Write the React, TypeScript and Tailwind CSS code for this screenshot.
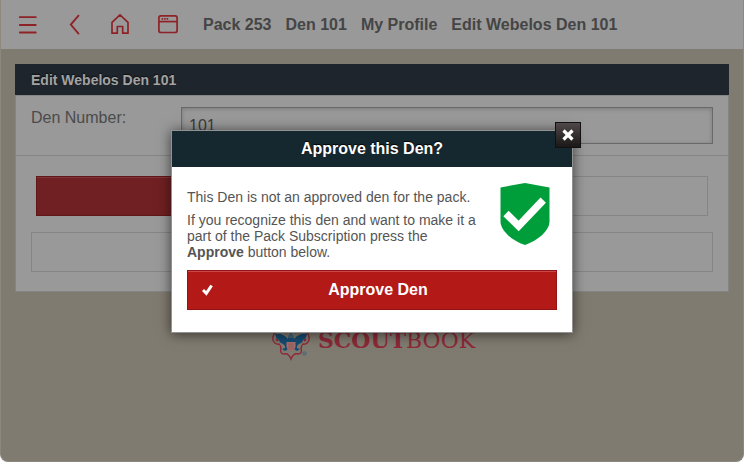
const crumbs = ['Pack 253', 'Den 101', 'My Profile', 'Edit Webelos Den 101'];

function MenuIcon() {
  return (
    <svg width="20" height="22" viewBox="0 0 20 22" fill="none" stroke="#8f2226" strokeWidth="1.8" strokeLinecap="round">
      <path d="M2.8 3.2h16M2.8 11h16M2.8 18.5h16" />
    </svg>
  );
}

function BackIcon() {
  return (
    <svg width="12" height="22" viewBox="0 0 12 22" fill="none" stroke="#8f2226" strokeWidth="1.8" strokeLinecap="round">
      <path d="M9.500 1.600L1.800 10.600l7.700 9" />
    </svg>
  );
}

function HomeIcon() {
  return (
    <svg width="20" height="22" viewBox="0 0 20 22" fill="none" stroke="#8f2226" strokeWidth="1.7" strokeLinejoin="round">
      <path d="M2 8.4L10 0.9l8 7.5v10.8h-5.300v-6.700H7.300v6.700H2z" />
    </svg>
  );
}

function WindowIcon() {
  return (
    <svg width="20" height="20" viewBox="0 0 20 20" fill="none" stroke="#8f2226" strokeWidth="1.7">
      <rect x="0.9" y="0.9" width="18.2" height="16.600" rx="2" />
      <path d="M1 6.600h18" />
      <path d="M3.600 3.800h6.600" strokeDasharray="1.6 0.9" />
    </svg>
  );
}

function ShieldIcon() {
  return (
    <svg width="50" height="62" viewBox="0 0 50 62">
      <path d="M25 0L49.500 4.500V39C49 48 38 57.500 25 62C12 57.500 1 48 0.500 39V4.500z" fill="#009e3b" />
      <path d="M6 30.500L18.600 43L43.200 17.200" fill="none" stroke="#fff" strokeWidth="7.500" />
    </svg>
  );
}

function ScoutEmblem() {
  return (
    <svg width="38" height="38" viewBox="0 0 38 38" fill="none">
      {/* Fleur-de-lis outline */}
      <path
        d="M19 1c-3 3-5 5-4 8C11 5 2 6 1 13c-1 5 3 8 7 7M19 1c3 3 5 5 4 8c4-4 13-3 14 4c1 5-3 8-7 7"
        stroke="#8c2937"
        strokeWidth="1.400"
      />
      <path
        d="M8 21l1 3c-1 4 0 6 3 6c3-1 5 0 7 5c2-5 4-6 7-5c3 0 4-2 3-6l1-3"
        stroke="#8c2937"
        strokeWidth="1.400"
      />
      <path d="M4 15l2 2M34 15l-2 2" stroke="#8c2937" strokeWidth="2" />
      {/* Eagle */}
      <path
        d="M3 10c5-1 10 1 13 5l1-4l2-2l2 2l1 4c3-4 8-6 13-5c-1 4-2 5-4 6c0 2-2 3-4 4l-2 2v2l3 1l-3 2l-3-2h-6l-3 2l-3-2l3-1v-2l-2-2c-2-1-4-2-4-4c-2-1-3-2-4-6z"
        fill="#164b72"
      />
      <path d="M18 10v4M20 10v4" stroke="#8e9699" strokeWidth="0.700" />
      <path d="M14.500 18h9v4c0 3-2 4-4.500 5c-2.500-1-4.500-2-4.500-5z" fill="#a5706b" />
      <path d="M17 19.500v6M19 19.500v7M21 19.500v6" stroke="#8c4850" strokeWidth="0.600" />
      <circle cx="32.500" cy="29.500" r="1.700" stroke="#35607a" strokeWidth="0.800" />
      <circle cx="32.500" cy="29.500" r="0.500" fill="#35607a" />
    </svg>
  );
}

function ApproveDialog() {
  return (
    <div
      role="dialog"
      aria-labelledby="approve-title"
      className="absolute left-1/2 top-[130px] w-[402px] max-w-full -translate-x-1/2 border border-[#929292] bg-white shadow-[0_1px_12px_rgba(0,0,0,0.6)]"
    >
      <button
        type="button"
        aria-label="Close"
        className="absolute -right-[9px] -top-[9px] flex size-[26px] items-center justify-center border border-[#111] bg-linear-to-b from-[#504949] to-[#1c1818]"
      >
        <svg width="12" height="12" viewBox="0 0 12 12" stroke="#fff" strokeWidth="3.200">
          <path d="M1.500 1.500l9 9M10.500 1.500l-9 9" />
        </svg>
      </button>

      <h2
        id="approve-title"
        className="bg-[#16282f] py-2 text-center text-base leading-5 font-bold text-white [text-shadow:0_-1px_1px_#000]"
      >
        Approve this Den?
      </h2>

      <div className="px-[15px] pt-4 pb-[22px]">
        <div className="flex justify-between pr-[7px]">
          <div className="w-[292px] space-y-[7px] pt-[6px] text-sm leading-4 text-[#555]">
            <p>This Den is not an approved den for the pack.</p>
            <p>
              If you recognize this den and want to make it a part of the Pack Subscription press the{' '}
              <strong>Approve</strong> button below.
            </p>
          </div>
          <ShieldIcon />
        </div>

        <button
          type="button"
          className="mt-[10px] grid h-10 w-full grid-cols-[auto_1fr] items-center border border-[#951316] bg-[#b31917] px-[14px] text-base font-bold text-white shadow-[inset_0_1px_0_#c74a48]"
        >
          <svg width="12" height="12" viewBox="0 0 12 12" fill="none" stroke="#fff" strokeWidth="3">
            <path d="M1 6l3.300 3.300L9.600 1.500" />
          </svg>
          <span>Approve Den</span>
        </button>
      </div>
    </div>
  );
}

export default function App() {
  return (
    <div className="relative flex min-h-screen flex-col overflow-hidden rounded-b-lg border-x border-b border-[#8c887e] bg-[#807b70] font-['Liberation_Sans',Arial,sans-serif] text-[#454545]">
      <header className="flex h-[49px] items-center bg-[#999] pl-4">
        <div className="flex items-center">
          <button type="button" aria-label="Menu"><MenuIcon /></button>
          <button type="button" aria-label="Back" className="ml-8"><BackIcon /></button>
          <a href="#home" aria-label="Home" className="ml-[29px]"><HomeIcon /></a>
          <a href="#dashboard" aria-label="Dashboard" className="ml-7"><WindowIcon /></a>
        </div>
        <nav className="ml-[25px] flex gap-[14px] text-base font-bold whitespace-nowrap">
          {crumbs.map((crumb) => (
            <a key={crumb} href="#crumb">{crumb}</a>
          ))}
        </nav>
      </header>

      <main className="px-[14px] pt-[15px]">
        <h1 className="bg-[#1e252c] px-4 pt-[6px] pb-[5px] text-sm leading-5 font-bold text-[#a3a3a3] [text-shadow:0_-1px_1px_#111]">
          Edit Webelos Den 101
        </h1>
        <form className="border border-[#858585] bg-[#999]">
          <div className="flex border-b border-[#858585] px-[15px] py-[11px]">
            <label htmlFor="den-number" className="w-[150px] shrink-0 pt-px text-base leading-5 text-[#4b4b4b]">
              Den Number:
            </label>
            <input
              id="den-number"
              type="text"
              defaultValue="101"
              className="h-[37px] min-w-0 flex-1 border border-[#696969] bg-[#999] px-[7px] text-base text-[#3c3c3c] shadow-[inset_0_1px_4px_rgba(0,0,0,0.2)]"
            />
          </div>
          <div className="flex px-5 pt-5">
            <button type="button" aria-label="Update" className="h-10 flex-1 border border-[#5f1719] bg-[#702022] shadow-[inset_0_1px_0_#823538]" />
            <button type="button" aria-label="Cancel" className="h-10 flex-1 border border-[#858585]" />
          </div>
          <div className="flex px-[15px] pt-4 pb-[19px]">
            <button type="button" aria-label="Remove Den" className="h-10 flex-1 border border-[#858585]" />
          </div>
        </form>
      </main>

      <footer className="mt-8 flex items-start justify-center gap-2 pl-[3px]">
        <ScoutEmblem />
        <span className="font-['DejaVu_Serif',serif] text-[22px] leading-8 text-[#8c2937]">
          <b>SCOUT</b>BOOK
        </span>
      </footer>

      <ApproveDialog />
    </div>
  );
}
